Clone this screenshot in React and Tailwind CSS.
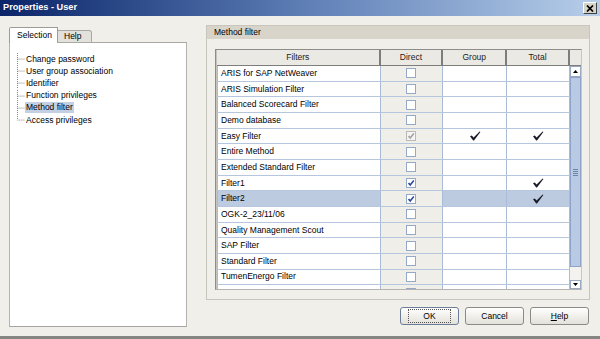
import React from "react";

const ROWS = [
  { name: "ARIS for SAP NetWeaver" },
  { name: "ARIS Simulation Filter" },
  { name: "Balanced Scorecard Filter" },
  { name: "Demo database" },
  { name: "Easy Filter", direct: "disabled", group: true, total: true },
  { name: "Entire Method" },
  { name: "Extended Standard Filter" },
  { name: "Filter1", direct: "checked", total: true },
  { name: "Filter2", direct: "checked", total: true, selected: true },
  { name: "OGK-2_23/11/06" },
  { name: "Quality Management Scout" },
  { name: "SAP Filter" },
  { name: "Standard Filter" },
  { name: "TumenEnergo Filter" },
  { name: "" },
];

const TREE = [
  "Change password",
  "User group association",
  "Identifier",
  "Function privileges",
  "Method filter",
  "Access privileges",
];

function Checkbox({ state }) {
  const disabled = state === "disabled";
  return (
    <div
      className={`w-[10px] h-[10px] border flex items-center justify-center ${
        disabled ? "border-[#b9b9b6] bg-[#f4f4f2]" : "border-[#94a8c8] bg-white"
      }`}
    >
      {state && (
        <svg width="8" height="8" viewBox="0 0 8 8">
          <path
            d="M1.5 4 L3.2 6 L6.8 1.5"
            fill="none"
            stroke={disabled ? "#a3a3a3" : "#2c4a9c"}
            strokeWidth="1.6"
          />
        </svg>
      )}
    </div>
  );
}

function Tick() {
  return (
    <svg width="12" height="10" viewBox="0 0 12 10">
      <path d="M1 5.2 L2.8 4.4 L4.6 6.6 L10.6 0.4 L11.4 1 L5 9.4 L4.2 9.4 Z" fill="#1c1c2a" />
    </svg>
  );
}

function TreeLine({ last }) {
  return (
    <svg width="8" height="12.2" viewBox="0 0 8 12.2" className="shrink-0">
      <path
        d={last ? "M0.5 0 V6.1 H8" : "M0.5 0 V12.2 M0.5 6.1 H8"}
        fill="none"
        stroke="#8a8a8a"
        strokeWidth="1"
        strokeDasharray="1 1"
      />
    </svg>
  );
}

function Button({ children, focus }) {
  return (
    <button
      type="button"
      className={`w-[59px] h-[18px] rounded-[3px] border bg-linear-to-b from-white to-[#e3e1d9] text-[8.5px] text-black flex items-center justify-center ${
        focus ? "border-[#6b7d99]" : "border-[#8a8a86]"
      }`}
    >
      <span
        className={`px-[14px] leading-[12px] ${focus ? "outline-1 outline-dotted outline-[#555]" : ""}`}
      >
        {children}
      </span>
    </button>
  );
}

export default function App() {
  return (
    <div
      className="w-[600px] h-[339px] bg-[#f0efea] flex flex-col overflow-hidden text-black"
      style={{ fontFamily: '"Liberation Sans", Arial, sans-serif' }}
    >
      {/* title bar */}
      <div className="h-[16px] shrink-0 flex items-center justify-between bg-linear-to-r from-[#0c2468] via-[#5d7db5] to-[#b8cfea]">
        <span className="pl-[3px] text-[9.2px] font-bold text-white leading-none">Properties - User</span>
        <div className="mr-[3px] w-[14px] h-[12px] bg-[#d6d3cb] border border-t-white border-l-white border-r-[#404040] border-b-[#404040] flex items-center justify-center">
          <svg width="8" height="7" viewBox="0 0 8 7">
            <path d="M1 0.5 L7 6.5 M7 0.5 L1 6.5" stroke="#000" strokeWidth="1.7" />
          </svg>
        </div>
      </div>

      <div className="flex-1 flex">
        {/* left: tab control */}
        <div className="ml-[9px] w-[178px] pt-[11px] flex flex-col">
          <div className="h-[16px] flex items-end">
            <div className="w-[49px] h-[16px] bg-white border border-b-0 border-[#9c9b96] rounded-tl-[2px] flex items-center pl-[7px] text-[8.5px]">
              Selection
            </div>
            <div className="w-[34px] h-[13px] bg-[#e3e1db] border border-l-0 border-[#a9a8a2] rounded-tr-[3px] flex items-center pl-[6px] text-[8.5px]">
              Help
            </div>
            <div className="flex-1 border-b border-[#a9a8a2]" />
          </div>
          <div className="h-[284px] bg-white border border-t-0 border-l-[#b4b3ae] border-r-[#b4b3ae] border-b-[#a5a4a0] pt-[10px] pl-[7px]">
            {TREE.map((t, i) => (
              <div key={t} className="h-[12.2px] flex items-center">
                <TreeLine last={i === TREE.length - 1} />
                <span
                  className={`text-[8.5px] leading-[11px] px-px ${
                    t === "Method filter" ? "bg-[#c3d0e4]" : ""
                  }`}
                >
                  {t}
                </span>
              </div>
            ))}
          </div>
        </div>

        {/* right */}
        <div className="ml-[19px] w-[384px] pt-[9px] flex flex-col">
          <div className="h-[275px] border border-[#c8c5bc] flex flex-col">
            <div className="h-[13px] bg-[#d8d4c9] flex items-center pl-[7px] text-[8.5px]">Method filter</div>
            <div className="mt-[10px] ml-[8px] w-[367px] h-[241px] border border-t-[#8c8c8a] border-l-[#8c8c8a] border-r-[#c9c7c0] border-b-[#b5b3ad] flex">
              <div className="w-[354px] flex flex-col border-l border-[#c5c3bc]">
                {/* header */}
                <div className="h-[16px] flex bg-[#ebe9e3] border-b border-[#7d7d7b] text-[8.5px] text-[#222]">
                  <div className="w-[164px] flex items-center justify-center border-r-2 border-[#7d7d7b]">Filters</div>
                  <div className="w-[63px] flex items-center justify-center border-r-2 border-[#7d7d7b]">Direct</div>
                  <div className="w-[64px] flex items-center justify-center border-r-2 border-[#7d7d7b]">Group</div>
                  <div className="w-[63px] flex items-center justify-center border-r-2 border-[#7d7d7b]">Total</div>
                </div>
                {/* body */}
                <div className="h-[223px] overflow-hidden flex flex-col">
                  {ROWS.map((r, i) => (
                    <div key={i} className="h-[15.67px] shrink-0 flex border-b border-[#b6c6de] text-[8.5px]">
                      <div
                        className={`w-[164px] flex items-center pl-[3px] border-l border-r border-[#a9bbd6] ${
                          r.selected ? "bg-[#bccbe0]" : "bg-white"
                        }`}
                      >
                        {r.name}
                      </div>
                      <div className="w-[63px] flex items-center justify-center bg-[#efeee9] border-r border-[#a9bbd6]">
                        <Checkbox state={r.direct} />
                      </div>
                      <div
                        className={`w-[64px] flex items-center justify-center border-r border-[#a9bbd6] ${
                          r.selected ? "bg-[#bccbe0]" : "bg-white"
                        }`}
                      >
                        {r.group && <Tick />}
                      </div>
                      <div
                        className={`w-[63px] flex items-center justify-center border-r border-[#a9bbd6] ${
                          r.selected ? "bg-[#bccbe0]" : "bg-white"
                        }`}
                      >
                        {r.total && <Tick />}
                      </div>
                    </div>
                  ))}
                </div>
              </div>
              {/* scrollbar */}
              <div className="w-[11px] flex flex-col">
                <div className="h-[16px] bg-[#ebe9e3] border-b border-[#7d7d7b]" />
                <div className="h-[11px] bg-white border border-[#9aa9c2] flex items-center justify-center">
                  <svg width="5" height="3" viewBox="0 0 5 3">
                    <path d="M0 3 L2.5 0 L5 3 Z" fill="#000" />
                  </svg>
                </div>
                <div className="flex-1 bg-[#b9cae4] border border-[#8ea3c6] flex items-center justify-center">
                  <div className="w-[5px] flex flex-col gap-px">
                    <div className="h-px bg-[#6f84aa]" />
                    <div className="h-px bg-[#6f84aa]" />
                    <div className="h-px bg-[#6f84aa]" />
                    <div className="h-px bg-[#6f84aa]" />
                  </div>
                </div>
                <div className="h-[13px] bg-[#f3f2ee]" />
                <div className="h-[9px] bg-white border border-[#9aa9c2] flex items-center justify-center">
                  <svg width="5" height="3" viewBox="0 0 5 3">
                    <path d="M0 0 L2.5 3 L5 0 Z" fill="#000" />
                  </svg>
                </div>
              </div>
            </div>
          </div>

          <div className="mt-[7px] flex justify-end gap-[6px] pr-[1px]">
            <Button focus>OK</Button>
            <Button>Cancel</Button>
            <Button>
              <span className="underline">H</span>elp
            </Button>
          </div>
        </div>
      </div>

      <div className="h-[3px] shrink-0 bg-[#858582]" />
    </div>
  );
}
